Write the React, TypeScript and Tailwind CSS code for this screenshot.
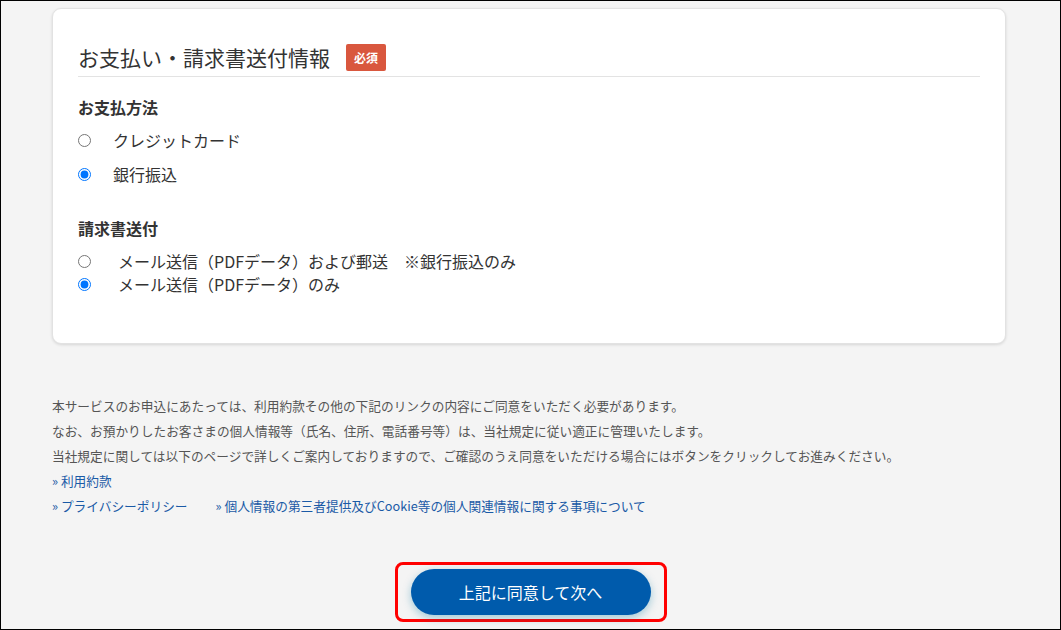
import React from "react";

const font = { fontFamily: '"Noto Sans CJK JP", "Noto Sans", sans-serif' };

function Radio({ checked, name, label, gap }: { checked?: boolean; name: string; label: string; gap: string }) {
  return (
    <label className={`flex items-center ${gap}`}>
      <input
        type="radio"
        name={name}
        defaultChecked={checked}
        className="m-0 h-[13px] w-[13px] accent-[#0075ff]"
      />
      <span>{label}</span>
    </label>
  );
}

export default function App() {
  return (
    <div
      style={font}
      className="w-[1061px] h-[630px] overflow-hidden border border-black bg-[#f4f4f4] text-[#333]"
    >
      <div className="ml-[51px] mt-[7px] w-[954px] rounded-[9px] border border-[#e2e2e2] bg-white px-[25px] pt-[35px] pb-[49px] shadow-[0_1px_3px_rgba(0,0,0,0.12)]">
        <div className="flex items-center gap-[16px] border-b border-[#e3e3e3] pb-[5px]">
          <h2 className="text-[21px] leading-[27px] text-[#333] font-normal">お支払い・請求書送付情報</h2>
          <span className="flex h-[27px] w-[40px] items-center justify-center rounded-[2px] bg-[#d9573e] text-[12px] font-bold text-white">
            必須
          </span>
        </div>

        <div className="mt-[20px] text-[16px] font-bold leading-[20px]">お支払方法</div>
        <div className="mt-[13px] flex flex-col gap-[14px] text-[16px] leading-[20px]">
          <Radio name="pay" label="クレジットカード" gap="gap-[22px]" />
          <Radio name="pay" label="銀行振込" checked gap="gap-[22px]" />
        </div>

        <div className="mt-[34px] text-[16px] font-bold leading-[20px]">請求書送付</div>
        <div className="mt-[13px] flex flex-col gap-[3px] text-[16px] leading-[20px]">
          <Radio name="inv" label="メール送信（PDFデータ）および郵送　※銀行振込のみ" gap="gap-[27px]" />
          <Radio name="inv" label="メール送信（PDFデータ）のみ" checked gap="gap-[27px]" />
        </div>
      </div>

      <div className="ml-[51px] mt-[49px] text-[12.7px] leading-[25px] text-[#555]">
        <p>本サービスのお申込にあたっては、利用約款その他の下記のリンクの内容にご同意をいただく必要があります。</p>
        <p>なお、お預かりしたお客さまの個人情報等（氏名、住所、電話番号等）は、当社規定に従い適正に管理いたします。</p>
        <p>当社規定に関しては以下のページで詳しくご案内しておりますので、ご確認のうえ同意をいただける場合にはボタンをクリックしてお進みください。</p>
        <div className="text-[#1a5aa6]">
          <a href="#">» 利用約款</a>
        </div>
        <div className="flex gap-[28px] text-[#1a5aa6]">
          <a href="#">» プライバシーポリシー</a>
          <a href="#">» 個人情報の第三者提供及びCookie等の個人関連情報に関する事項について</a>
        </div>
      </div>

      <div className="mt-[44px] flex justify-center">
        <div className="rounded-[8px] border-[3px] border-[#ff0000] px-[13px] pt-[4px] pb-[4px]">
          <button className="flex h-[46px] w-[240px] items-center justify-center rounded-full bg-[#005bac] text-[16px] text-white shadow-[0_3px_8px_rgba(0,120,160,0.35)]">
            上記に同意して次へ
          </button>
        </div>
      </div>
    </div>
  );
}
